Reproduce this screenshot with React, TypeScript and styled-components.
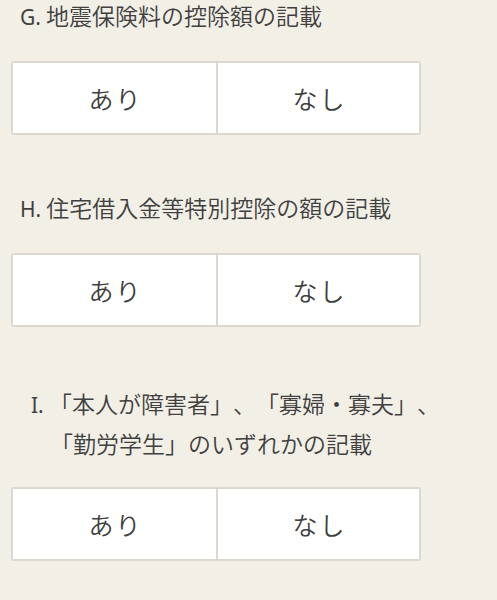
import React from 'react';
import styled, { createGlobalStyle } from 'styled-components';

const GlobalStyle = createGlobalStyle`
      html, body {
            margin: 0;
            padding: 0;
            background-color: #f2efe6;
      }
      body {
            font-family: 'Noto Sans', 'Noto Sans CJK JP', sans-serif;
            color: #3c3c3c;
      }
`;

type Question = {
      label: string;
      lines: string[];
};

const questions: Question[] = [
      { label: 'G.', lines: ['地震保険料の控除額の記載'] },
      { label: 'H.', lines: ['住宅借入金等特別控除の額の記載'] },
      {
            label: 'I.',
            lines: ['「本人が障害者」、「寡婦・寡夫」、', '「勤労学生」のいずれかの記載'],
      },
];

const App: React.FC = () => {
      return (
            <>
                  <GlobalStyle />
                  <Page>
                        {questions.map((q) => (
                              <Section key={q.label}>
                                    <Heading $hanging={q.lines.length > 1}>
                                          <Label>{q.label}</Label>{' '}
                                          {q.lines.map((line, i) => (
                                                <React.Fragment key={i}>
                                                      {i > 0 && <br />}
                                                      {line}
                                                </React.Fragment>
                                          ))}
                                    </Heading>
                                    <Choices>
                                          <Choice type='button'>あり</Choice>
                                          <Choice type='button'>なし</Choice>
                                    </Choices>
                              </Section>
                        ))}
                  </Page>
            </>
      );
};

export default App;

const Page = styled.div`
      display: flex;
      flex-direction: column;
      gap: 57px;
      padding: 0 76px 40px 11px;
      width: 410px;
`;

const Section = styled.section`
      display: flex;
      flex-direction: column;
      gap: 31px;
`;

const Heading = styled.h3<{ $hanging: boolean }>`
      margin: ${(p) => (p.$hanging ? '-1px 0 -7px' : '0')};
      padding-left: ${(p) => (p.$hanging ? '39px' : '9px')};
      text-indent: ${(p) => (p.$hanging ? '-19px' : '0')};
      font-family: 'Noto Sans CJK JP', sans-serif;
      font-size: 23px;
      font-weight: 350;
      line-height: ${(p) => (p.$hanging ? '40px' : '30px')};
      color: #404040;
      white-space: nowrap;
      text-spacing-trim: space-all;
`;

const Label = styled.span`
      font-family: 'Noto Sans', sans-serif;
      font-size: 21px;
      font-weight: 400;
      line-height: 0;
`;

const Choices = styled.div`
      display: grid;
      grid-template-columns: 1fr 1fr;
      height: 74px;
      background-color: #fff;
      border: 2px solid #dcd8d0;
      border-radius: 3px;
      box-sizing: border-box;
      overflow: hidden;
`;

const Choice = styled.button`
      border: none;
      background: #fff;
      font-family: 'Noto Sans CJK JP', sans-serif;
      font-size: 25px;
      font-weight: 350;
      color: #404040;
      letter-spacing: 2px;
      padding: 0 0 0 2px;
      cursor: pointer;

      & + & {
            border-left: 2px solid #dcd8d0;
      }
`;
